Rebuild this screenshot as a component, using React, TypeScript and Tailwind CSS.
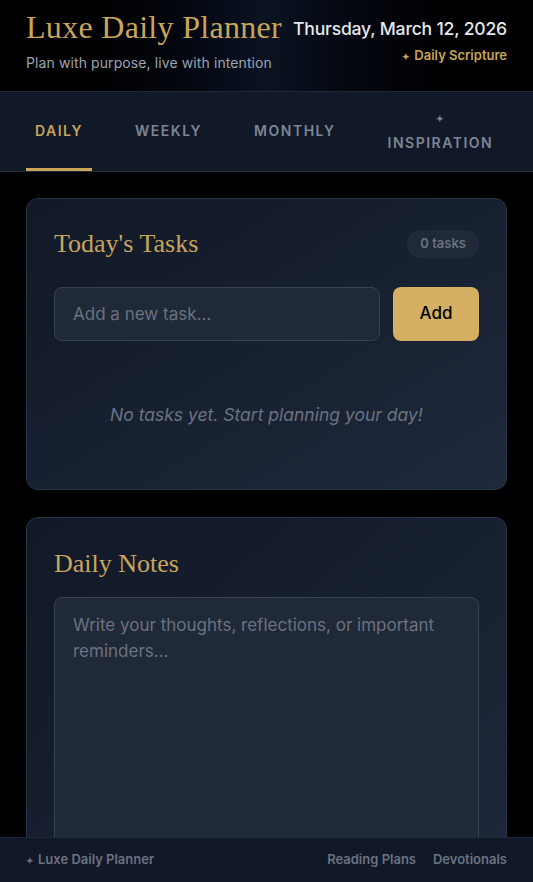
const serif = { fontFamily: '"Liberation Serif", "DejaVu Serif", serif' }

const tabs = ['Daily', 'Weekly', 'Monthly']

export default function App() {
  return (
    <div className="min-h-screen bg-black font-['Inter',sans-serif] pb-[45px]">
      <header className="bg-gradient-to-r from-black via-[#0b1322] to-black px-[26px] pt-[7px] h-[92px] border-b border-[#1f2937] flex items-start justify-between whitespace-nowrap">
        <div className="shrink-0">
          <h1 style={serif} className="text-[32px] leading-[40px] text-[#c9a55a] tracking-[0.3px]">
            Luxe Daily Planner
          </h1>
          <p className="text-[14px] text-[#9ca3af] mt-[5px] tracking-[0.1px]">Plan with purpose, live with intention</p>
        </div>
        <div className="text-right pt-[10px]">
          <p className="text-[17.6px] font-medium text-[#e5e7eb] leading-[24px] tracking-[-0.2px]">Thursday, March 12, 2026</p>
          <p className="text-[13px] font-semibold text-[#c9a55a] mt-[5px]">
            <span className="text-[9px] mr-1 align-middle">✦</span>Daily Scripture
          </p>
        </div>
      </header>

      <nav className="bg-[#111827] border-b border-[#1f2937] px-[26px] flex gap-[34px] h-[80px]">
        {tabs.map((t, i) => (
          <button
            key={t}
            className={`px-[9px] h-full flex items-center text-[14px] font-semibold uppercase tracking-[1.5px] border-b-[3px] ${
              i === 0 ? 'text-[#c9a55a] border-[#c9a55a]' : 'text-[#7c8595] border-transparent'
            }`}
          >
            {t}
          </button>
        ))}
        <button className="px-[9px] pt-[6px] h-full flex flex-col items-center justify-center text-[14px] font-semibold uppercase tracking-[1.5px] text-[#7c8595] border-b-[3px] border-transparent">
          <span className="text-[9px] leading-[12px]">✦</span>
          <span className="mt-[7px]">Inspiration</span>
        </button>
      </nav>

      <main className="px-[26px] pt-[26px] flex flex-col gap-[27px]">
        <section className="rounded-xl border border-[#2a3446] bg-gradient-to-br from-[#111827] to-[#1e293b] px-[27px] pt-[28px] pb-[61px]">
          <div className="flex items-center justify-between">
            <h2 style={serif} className="text-[26px] text-[#c9a55a] leading-[34px]">Today's Tasks</h2>
            <span className="rounded-full bg-[#1f2937] px-[13px] py-[4px] text-[13px] font-semibold text-[#6b7280]">
              0 tasks
            </span>
          </div>
          <div className="flex gap-[13px] mt-[26px]">
            <input
              placeholder="Add a new task..."
              className="flex-1 min-w-0 h-[54px] rounded-lg bg-[#1f2937] border border-[#374151] px-[18px] text-[17px] text-white placeholder:text-[#6b7280] outline-none"
            />
            <button className="w-[86px] h-[54px] rounded-lg bg-[#d4af61] text-[17px] font-medium text-black">Add</button>
          </div>
          <p className="text-center italic text-[17.5px] text-[#6b7280] mt-[61px]">
            No tasks yet. Start planning your day!
          </p>
        </section>

        <section className="rounded-xl border border-[#2a3446] bg-gradient-to-br from-[#111827] to-[#1e293b] px-[27px] pt-[29px] pb-[28px]">
          <h2 style={serif} className="text-[26px] text-[#c9a55a] leading-[34px]">Daily Notes</h2>
          <textarea
            placeholder="Write your thoughts, reflections, or important reminders..."
            className="block w-full h-[300px] mt-[16px] rounded-lg bg-[#1f2937] border border-[#374151] px-[18px] py-[14px] text-[17px] leading-[26px] text-white placeholder:text-[#6b7280] outline-none resize-none"
          />
        </section>
      </main>

      <footer className="fixed bottom-0 left-0 right-0 h-[45px] bg-[#111827] border-t border-[#1f2937] px-[26px] flex items-center justify-between text-[13px] font-semibold text-[#6b7280]">
        <span>
          <span className="text-[9px] mr-1">✦</span>Luxe Daily Planner
        </span>
        <div className="flex gap-[17px]">
          <span>Reading Plans</span>
          <span>Devotionals</span>
        </div>
      </footer>
    </div>
  )
}
